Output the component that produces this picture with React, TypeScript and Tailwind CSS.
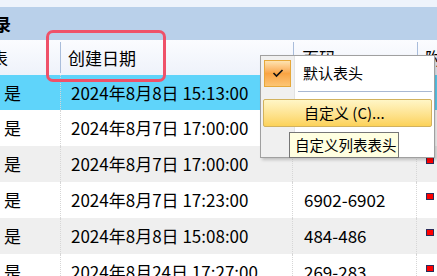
import React from "react"

const font = { fontFamily: '"Microsoft YaHei", "Noto Sans CJK SC", "Noto Sans", sans-serif' }

const rows = [
  { flag: "是", date: "2024年8月8日 15:13:00", page: "", selected: true },
  { flag: "是", date: "2024年8月7日 17:00:00", page: "" },
  { flag: "是", date: "2024年8月7日 17:00:00", page: "" },
  { flag: "是", date: "2024年8月7日 17:23:00", page: "6902-6902" },
  { flag: "是", date: "2024年8月8日 15:08:00", page: "484-486" },
  { flag: "是", date: "2024年8月24日 17:27:00", page: "269-283" },
]

function CheckIcon() {
  return (
    <div className="w-[27px] h-[27px] border border-[#e6a83a] bg-gradient-to-b from-[#fde3b0] via-[#f9a443] to-[#fcc574] flex items-center justify-center">
      <svg width="12" height="10" viewBox="0 0 12 10">
        <path d="M1.5 5 L4.5 8 L10.5 2" fill="none" stroke="#111" strokeWidth="1.6" />
      </svg>
    </div>
  )
}

export default function App() {
  return (
    <div className="relative w-[437px] h-[276px] overflow-hidden bg-white text-black" style={font}>
      {/* window strip + title */}
      <div className="h-[7px] bg-[#eef3fb]" />
      <div className="h-[33px] bg-[#b9d0ea] flex items-center">
        <span className="ml-[-6px] text-[17px] font-bold leading-none">录</span>
      </div>

      {/* header */}
      <div className="h-[35px] flex bg-gradient-to-b from-[#fbfcff] to-[#eef2fa] text-[17px]">
        <div className="w-[60px] flex items-center overflow-hidden">
          <span className="ml-[-9px]">表</span>
        </div>
        <div className="w-[233px] flex items-center border-l border-[#a9bddb] my-[2px] pl-[7px]">创建日期</div>
        <div className="w-[124px] flex items-center border-l border-[#a9bddb] my-[2px] pl-[8px]">页码</div>
        <div className="flex-1 flex items-center border-l border-[#a9bddb] my-[2px] pl-[7px] overflow-hidden whitespace-nowrap">附件</div>
      </div>

      {/* rows */}
      {rows.map((r, i) => (
        <div
          key={i}
          className={
            "flex text-[17px] " +
            (i === 0 ? "h-[35px] bg-[#5fd4fa]" : "h-[36px] " + (i % 2 === 0 ? "bg-[#efefef]" : "bg-white"))
          }
        >
          <div className="w-[61px] flex items-center pl-[4px] border-r border-dotted border-[#d6d6d6]">{r.flag}</div>
          <div className="w-[232px] flex items-center pl-[10px] whitespace-nowrap border-r border-dotted border-[#d6d6d6]">{r.date}</div>
          <div className="w-[124px] flex items-center pl-[11px] border-r border-dotted border-[#d6d6d6]">{r.page}</div>
          <div className="flex-1 pl-[9px] pt-[11px]">
            <div className="w-[8px] h-[7px] bg-[#ff0000] border border-[#2c2c5a]" />
          </div>
        </div>
      ))}

      {/* pink highlight */}
      <div className="absolute left-[46px] top-[30px] w-[120px] h-[52px] border-[3px] border-[#ef5169] rounded-[7px]" />

      {/* context menu */}
      <div className="absolute left-[260px] top-[55px] w-[175px] h-[103px] bg-white border border-[#a0a0a0] shadow-[2px_2px_3px_rgba(0,0,0,0.2)]">
        <div className="absolute left-0 top-0 bottom-0 w-[34px] bg-[#f0f0f0] border-r border-[#e2e3e3]" />
        <div className="relative flex items-center h-[31px] pl-[3px] pt-[3px]">
          <CheckIcon />
          <span className="ml-[12px] text-[15px]">默认表头</span>
        </div>
        <div className="relative ml-[37px] mr-[2px] mt-[4px] h-px bg-[#a9b8d2]" />
        <div className="relative mx-[2px] mt-[7px] h-[28px] rounded-[2px] border border-[#d2b25e] bg-gradient-to-b from-[#fff6c6] to-[#fcd258] flex items-center pl-[40px] text-[15px]">
          自定义 (C)...
        </div>
      </div>

      {/* tooltip */}
      <div className="absolute left-[289px] top-[132px] w-[110px] h-[26px] bg-[#ffffe1] border border-[#767676] flex items-center pl-[5px] text-[14.5px] whitespace-nowrap">
        自定义列表表头
      </div>
    </div>
  )
}
